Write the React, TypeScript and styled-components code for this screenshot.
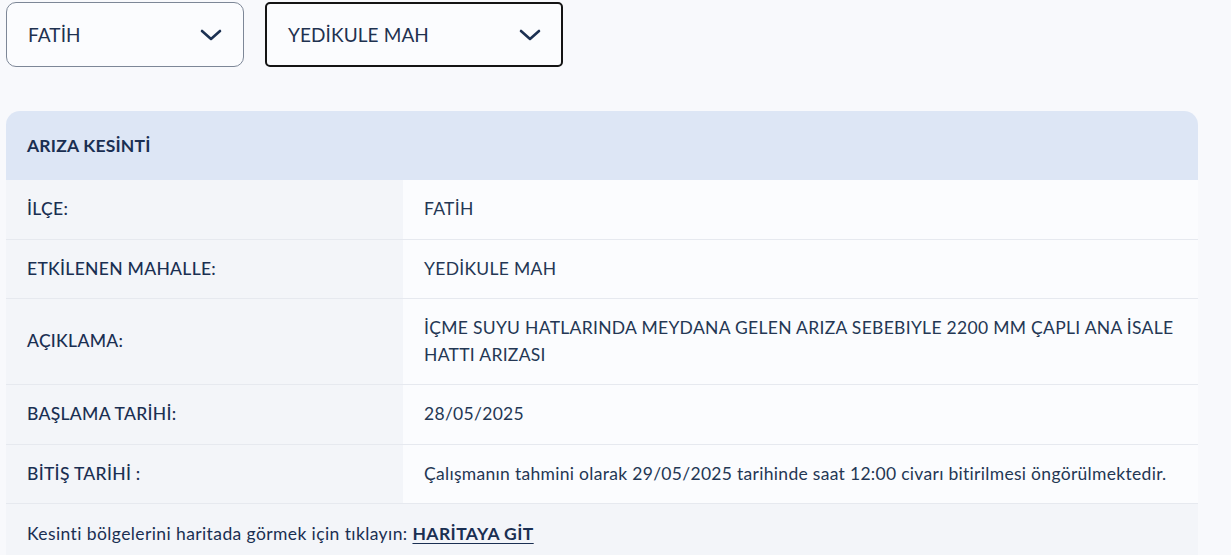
import React from "react";
import styled, { createGlobalStyle } from "styled-components";

const Global = createGlobalStyle`
  html, body { margin: 0; padding: 0; background: #f8f9fc; }
  body { font-family: "Lato", "Noto Sans", sans-serif; color: #1c3152; }
  * { box-sizing: border-box; }
`;

const Page = styled.div`
  padding: 2px 33px 0 6px;
  display: flex;
  flex-direction: column;
  gap: 44px;
`;

const Filters = styled.div`
  display: flex;
  gap: 21px;
`;

const Select = styled.div<{ $w: number; $active?: boolean }>`
  width: ${(p) => p.$w}px;
  height: 65px;
  display: flex;
  align-items: center;
  justify-content: space-between;
  padding: 0 ${(p) => (p.$active ? 20 : 21)}px 0 21px;
  background: #fbfcfe;
  border: ${(p) => (p.$active ? "2px solid #141414" : "1px solid #7d8797")};
  border-radius: ${(p) => (p.$active ? 5 : 10)}px;
  font-size: 19px;
  letter-spacing: 0.1px;
  color: #1f3250;
`;

const Chevron = () => (
  <svg width="22" height="12" viewBox="0 0 22 12" fill="none">
    <path d="M2 2l9 8 9-8" stroke="#1c3152" strokeWidth="2.6" strokeLinecap="round" strokeLinejoin="round" />
  </svg>
);

const Card = styled.div`
  border-radius: 14px 14px 0 0;
  overflow: hidden;
  font-size: 17.5px;
  letter-spacing: 0.3px;
`;

const Header = styled.div`
  height: 69px;
  display: flex;
  align-items: center;
  padding: 0 21px;
  background: #dde6f5;
  font-weight: 700;
  letter-spacing: 0.2px;
  color: #1a2f52;
`;

const Row = styled.div`
  display: grid;
  grid-template-columns: 397px 1fr;
  border-bottom: 1px solid #e6e9ef;
`;

const Label = styled.div`
  display: flex;
  align-items: center;
  padding: 16px 21px;
  background: #f3f5f9;
  font-weight: 500;
  line-height: 26.5px;
  color: #1a2f52;
`;

const Value = styled.div`
  display: flex;
  align-items: center;
  padding: 16px 21px;
  background: #fbfcfe;
  line-height: 26.5px;
  color: #243754;
`;

const Footer = styled.div`
  padding: 17px 21px;
  background: #f3f5f9;
  line-height: 26px;
  letter-spacing: 0.4px;
  color: #1a2f52;
`;

const MapLink = styled.a`
  color: #1a2f52;
  font-weight: 700;
  text-decoration: underline;
  text-underline-offset: 3px;
`;

const rows: [string, string][] = [
  ["İLÇE:", "FATİH"],
  ["ETKİLENEN MAHALLE:", "YEDİKULE MAH"],
  ["AÇIKLAMA:", "İÇME SUYU HATLARINDA MEYDANA GELEN ARIZA SEBEBIYLE 2200 MM ÇAPLI ANA İSALE HATTI ARIZASI"],
  ["BAŞLAMA TARİHİ:", "28/05/2025"],
  ["BİTİŞ TARİHİ :", "Çalışmanın tahmini olarak 29/05/2025 tarihinde saat 12:00 civarı bitirilmesi öngörülmektedir."],
];

export default function App() {
  return (
    <>
      <Global />
      <Page>
        <Filters>
          <Select $w={238}>
            <span>FATİH</span>
            <Chevron />
          </Select>
          <Select $w={298} $active>
            <span>YEDİKULE MAH</span>
            <Chevron />
          </Select>
        </Filters>
        <Card>
          <Header>ARIZA KESİNTİ</Header>
          {rows.map(([k, v]) => (
            <Row key={k}>
              <Label>{k}</Label>
              <Value>{v}</Value>
            </Row>
          ))}
          <Footer>
            Kesinti bölgelerini haritada görmek için tıklayın: <MapLink href="#">HARİTAYA GİT</MapLink>
          </Footer>
        </Card>
      </Page>
    </>
  );
}
